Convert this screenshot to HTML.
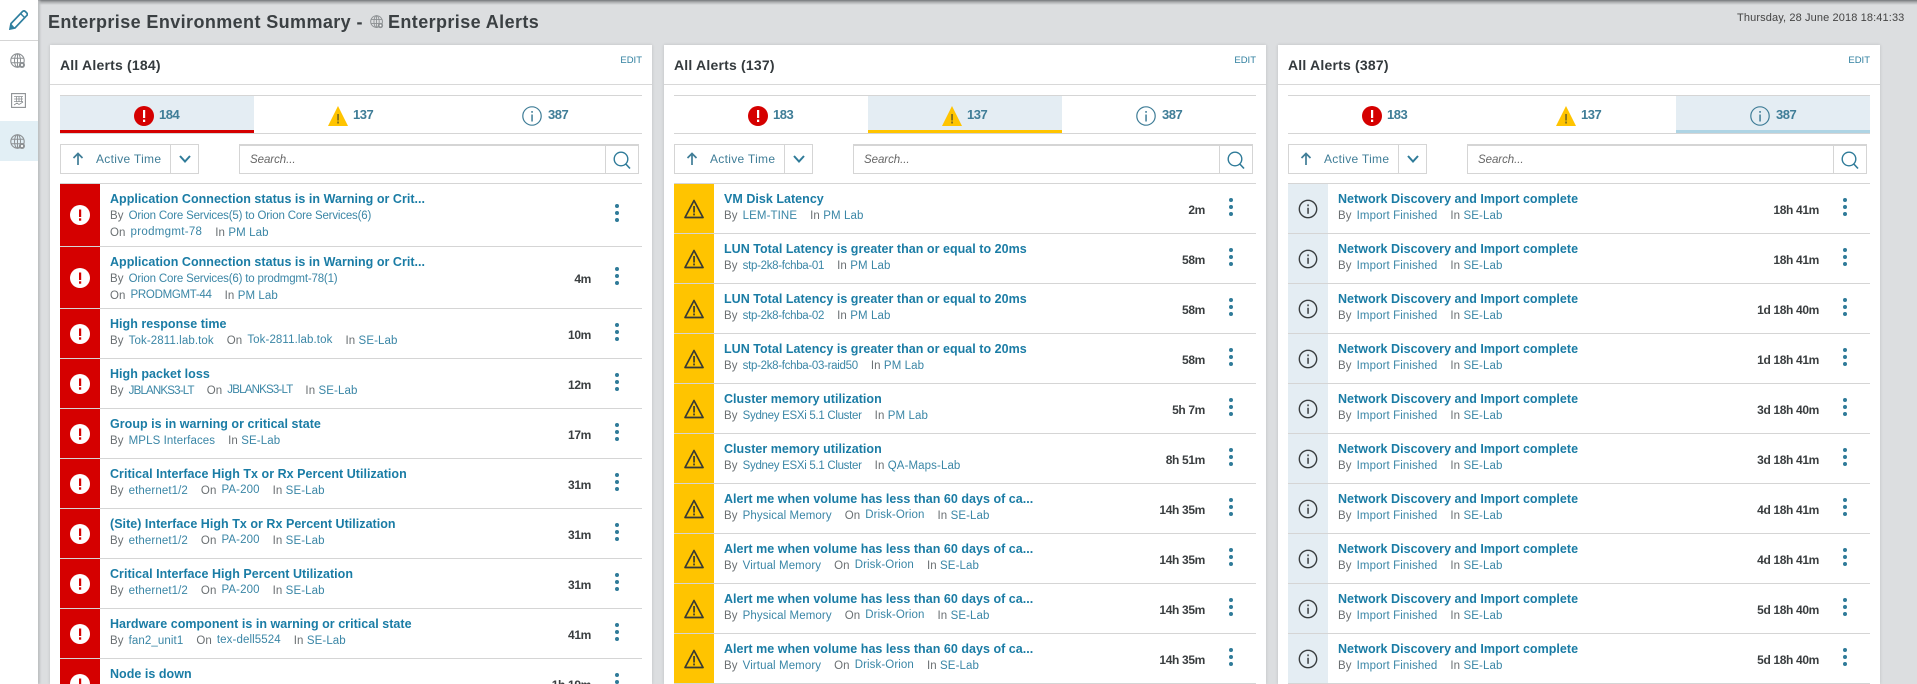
<!DOCTYPE html>
<html><head><meta charset="utf-8"><title>Enterprise Alerts</title>
<style>
*{box-sizing:border-box;margin:0;padding:0}
html,body{width:1917px;height:684px;overflow:hidden;background:#dcdee0;font-family:"Liberation Sans",sans-serif}
body{position:relative}
#top{position:absolute;left:0;top:0;width:1917px;height:5px;background:linear-gradient(#74777a,#a9abad 40%,#dcdee0)}
#side{position:absolute;left:0;top:0;width:38px;height:684px;background:#fff;box-shadow:2px 0 2px #bdbfc1}
#side .l{position:absolute;left:0;top:40px;width:38px;height:1px;background:#d5d5d5}
#side .a{position:absolute;left:0;top:121px;width:38px;height:40px;background:#e2eff5}
#side svg{position:absolute}
h1{position:absolute;left:48px;top:11px;font-size:18px;line-height:22px;font-weight:bold;color:#3b4043;white-space:nowrap;letter-spacing:.4px}
#date{position:absolute;left:1737px;top:11px;font-size:11px;line-height:14px;color:#444;white-space:nowrap;letter-spacing:.12px}
.p{position:absolute;top:45px;width:602px;height:639px;background:#fff;box-shadow:0 0 3px rgba(0,0,0,.15);overflow:hidden}
.p .hl{position:absolute;left:0;top:39px;width:602px;height:1px;background:#d8d8d8}
.p h2{position:absolute;left:10px;top:12px;font-size:14px;line-height:16px;font-weight:bold;color:#343a3d;white-space:nowrap;letter-spacing:.2px}
.p .ed{position:absolute;right:10px;top:10px;font-size:9.5px;line-height:12px;color:#2f7f9f}
.tb{position:absolute;left:10px;top:50px;width:582px;height:39px;border-top:1px solid #d5d5d5;border-bottom:1px solid #d5d5d5}
.ta{position:absolute;top:0;width:194px;height:37px;background:#e4edf3;border-bottom:3px solid}
.tb svg{position:absolute;top:10px;width:20px;height:20px}
.tb span{position:absolute;top:11px;font-size:13px;line-height:16px;font-weight:bold;color:#3f7d97;letter-spacing:-.5px}
.so{position:absolute;left:10px;top:99px;width:139px;height:30px;border:1px solid #d5d5d5}
.so .dv{position:absolute;left:109px;top:0;width:1px;height:28px;background:#d5d5d5}
.so span{position:absolute;left:35px;top:6px;font-size:12px;line-height:16px;color:#3f7d97;letter-spacing:.3px;white-space:nowrap}
.so svg{position:absolute}
.se{position:absolute;left:189px;top:99px;width:400px;height:30px;border:1px solid #d5d5d5;border-top-width:2px}
.se .dv{position:absolute;left:365px;top:0;width:1px;height:27px;background:#d5d5d5}
.se span{position:absolute;left:10px;top:6px;font-size:11.5px;line-height:16px;font-style:italic;color:#666;letter-spacing:-.05px}
.se svg{position:absolute;left:372px;top:4px}
.li{position:absolute;left:10px;top:0;width:582px;height:639px;overflow:hidden}
.r{position:absolute;left:0;width:582px;height:51px;border-top:1px solid #d5d5d5}
.h{height:63px}
.k{position:absolute;left:0;top:0;bottom:0;width:40px}
.e .k{background:#d50000}.w .k{background:#ffc400}.i .k{background:#e4edf3}
.ic{position:absolute;left:10px;top:50%;margin-top:-10px;width:20px;height:20px}
.t{position:absolute;left:50px;top:7px;font-size:12.5px;line-height:16px;font-weight:bold;color:#1a7ca5;white-space:nowrap;letter-spacing:.03px}
.s{position:absolute;left:50px;top:24px;font-size:11.5px;line-height:16px;color:#6b7073;white-space:nowrap;letter-spacing:.1px}
.s2{top:41px}
.s b{font-weight:normal;color:#3a86a6;margin-left:5px}
.s b.o{position:relative;top:-1px}
.s b.v{margin-left:0}
.s b.n{letter-spacing:-.3px}
.s b.c{letter-spacing:-.18px}
.s i{font-style:normal;margin-left:13px}
.s i:first-child{margin-left:0}
.m{position:absolute;right:51px;top:50%;margin-top:-7px;font-size:12px;line-height:16px;font-weight:bold;color:#3a3e40;font-style:normal;white-space:nowrap;letter-spacing:-.35px}
.d{position:absolute;left:555px;top:50%;margin-top:-4px;width:4px;height:4px;border-radius:50%;background:#2f7b99;box-shadow:0 -7px 0 #2f7b99,0 7px 0 #2f7b99}
</style></head><body>
<svg width="0" height="0" style="position:absolute">
<defs>
<symbol id="te" viewBox="0 0 20 20"><circle cx="10" cy="10" r="10" fill="#d50000"/><rect x="9" y="4" width="2.2" height="8" fill="#fff"/><rect x="9" y="13.6" width="2.2" height="2.4" fill="#fff"/></symbol>
<symbol id="tw" viewBox="0 0 20 20"><path d="M10 0L20 20H0Z" fill="#ffc400"/><rect x="9.2" y="8" width="1.7" height="6.5" fill="#7a6a20"/><rect x="9.2" y="15.5" width="1.7" height="2" fill="#7a6a20"/></symbol>
<symbol id="ti" viewBox="0 0 20 20"><circle cx="10" cy="10" r="9.2" fill="none" stroke="#3f7d97" stroke-width="1.2"/><rect x="9.3" y="8.5" width="1.5" height="7" fill="#3f7d97"/><rect x="9.3" y="5" width="1.5" height="1.8" fill="#3f7d97"/></symbol>
<symbol id="e" viewBox="0 0 20 20"><circle cx="10" cy="10" r="10" fill="#fff"/><rect x="9" y="4.5" width="2.2" height="7.5" fill="#d50000"/><rect x="9" y="13.3" width="2.2" height="2.4" fill="#d50000"/></symbol>
<symbol id="w" viewBox="0 0 20 20"><path d="M10 1.500L19 18.500H1Z" fill="none" stroke="#383a34" stroke-width="1.700" stroke-linejoin="round"/><rect x="9.200" y="7" width="1.700" height="6.500" fill="#383a34"/><rect x="9.200" y="14.500" width="1.700" height="1.900" fill="#383a34"/></symbol>
<symbol id="n" viewBox="0 0 20 20"><circle cx="10" cy="10" r="8.700" fill="none" stroke="#3a3e40" stroke-width="1.400"/><rect x="9.300" y="8.800" width="1.500" height="6" fill="#3a3e40"/><rect x="9.300" y="5.400" width="1.500" height="1.800" fill="#3a3e40"/></symbol>
<symbol id="g" viewBox="0 0 16 16"><circle cx="7.500" cy="7.500" r="6.700" fill="none" stroke="#8c9093" stroke-width="1.100"/><ellipse cx="7.500" cy="7.500" rx="3" ry="6.700" fill="none" stroke="#8c9093"/><path d="M1 5.200H14M1 9.800H14M7.500 1V14" stroke="#8c9093" fill="none"/><circle cx="12" cy="12" r="3" fill="#8c9093"/><circle cx="12" cy="12" r="1.100" fill="#fff"/></symbol>
<symbol id="ua" viewBox="0 0 12 14"><path d="M6 13V2M1.500 6L6 1.500L10.500 6" fill="none" stroke="#3f7d97" stroke-width="1.700"/></symbol>
</defs></svg>
<div id="top"></div>
<div id="side"><div class="l"></div><div class="a"></div>
<svg style="left:9px;top:10px" width="19" height="20" viewBox="0 0 19 20"><path d="M13.500 1.500C14.500.7 15.500.7 16.300 1.500L17.800 3C18.500 3.800 18.500 4.800 17.700 5.600L6 18L1 19L2 13.500Z" fill="none" stroke="#2f7f9f" stroke-width="1.700"/><path d="M2 13.500L6 18L1 19Z" fill="#2f7f9f"/><path d="M11.500 3.500L15.500 7.500" stroke="#2f7f9f" stroke-width="1.400"/></svg>
<svg style="left:10px;top:53px" width="16" height="16"><use href="#g"/></svg>
<svg style="left:11px;top:93px" width="15" height="15" viewBox="0 0 15 15"><rect x=".6" y=".6" width="13.800" height="13.800" fill="none" stroke="#8c9093" stroke-width="1.100"/><path d="M3 3.500H12M3 6H12M3 8.500H12M5.500 3.500V9M8 3.500V9M10.500 3.500V9M3 12L6 10L8 11.500L12 9" fill="none" stroke="#8c9093" stroke-width=".8"/></svg>
<svg style="left:10px;top:134px" width="16" height="16"><use href="#g"/></svg>
</div>
<h1>Enterprise Environment Summary - <svg style="position:absolute;left:322px;top:4px" width="14" height="14" viewBox="0 0 16 16"><use href="#g"/></svg><span style="position:absolute;left:340px;top:0">Enterprise Alerts</span></h1>
<div id="date">Thursday, 28 June 2018 18:41:33</div>

<!-- PANEL 1 -->
<div class="p" style="left:50px"><h2>All Alerts (184)</h2><div class="ed">EDIT</div><div class="hl"></div>
<div class="tb"><div class="ta" style="left:0;border-color:#d50000"></div><svg style="left:74px"><use href="#te"/></svg><span style="left:99px">184</span><svg style="left:268px"><use href="#tw"/></svg><span style="left:293px">137</span><svg style="left:462px"><use href="#ti"/></svg><span style="left:488px">387</span></div>
<div class="so"><svg style="left:11px;top:7px" width="12" height="14"><use href="#ua"/></svg><span>Active Time</span><div class="dv"></div><svg style="left:117px;top:9px" width="14" height="10" viewBox="0 0 14 10"><path d="M2 2L7 7.500L12 2" fill="none" stroke="#2f7b99" stroke-width="2"/></svg></div>
<div class="se"><span>Search...</span><div class="dv"></div><svg width="20" height="20" viewBox="0 0 20 20"><circle cx="9" cy="9" r="6.800" fill="none" stroke="#2f7b99" stroke-width="1.400"/><path d="M13.800 14L18 18.500" stroke="#2f7b99" stroke-width="1.600"/></svg></div>
<div class="li">
<div class="r h e" style="top:138px"><div class="k"></div><svg class="ic"><use href="#e"/></svg><div class="t">Application Connection status is in Warning or Crit...</div><div class="s"><i>By</i><b class="c">Orion Core Services(5) to Orion Core Services(6)</b></div><div class="s s2"><i>On</i><b class="o" style="letter-spacing:.3px">prodmgmt-78</b><i>In</i> <b class="v">PM Lab</b></div><u class="d"></u></div>
<div class="r h e" style="top:201px"><div class="k"></div><svg class="ic"><use href="#e"/></svg><div class="t">Application Connection status is in Warning or Crit...</div><div class="s"><i>By</i><b class="c">Orion Core Services(6) to prodmgmt-78(1)</b></div><div class="s s2"><i>On</i><b class="o" style="letter-spacing:-.3px">PRODMGMT-44</b><i>In</i> <b class="v">PM Lab</b></div><em class="m">4m</em><u class="d"></u></div>
<div class="r e" style="top:263px"><div class="k"></div><svg class="ic"><use href="#e"/></svg><div class="t">High response time</div><div class="s"><i>By</i><b>Tok-2811.lab.tok</b><i>On</i><b class="o">Tok-2811.lab.tok</b><i>In</i> <b class="v">SE-Lab</b></div><em class="m">10m</em><u class="d"></u></div>
<div class="r e" style="top:313px"><div class="k"></div><svg class="ic"><use href="#e"/></svg><div class="t">High packet loss</div><div class="s"><i>By</i><b style="letter-spacing:-.8px">JBLANKS3-LT</b><i>On</i><b class="o" style="letter-spacing:-.8px">JBLANKS3-LT</b><i>In</i> <b class="v">SE-Lab</b></div><em class="m">12m</em><u class="d"></u></div>
<div class="r e" style="top:363px"><div class="k"></div><svg class="ic"><use href="#e"/></svg><div class="t">Group is in warning or critical state</div><div class="s"><i>By</i><b>MPLS Interfaces</b><i>In</i> <b class="v">SE-Lab</b></div><em class="m">17m</em><u class="d"></u></div>
<div class="r e" style="top:413px"><div class="k"></div><svg class="ic"><use href="#e"/></svg><div class="t">Critical Interface High Tx or Rx Percent Utilization</div><div class="s"><i>By</i><b>ethernet1/2</b><i>On</i><b class="o">PA-200</b><i>In</i> <b class="v">SE-Lab</b></div><em class="m">31m</em><u class="d"></u></div>
<div class="r e" style="top:463px"><div class="k"></div><svg class="ic"><use href="#e"/></svg><div class="t">(Site) Interface High Tx or Rx Percent Utilization</div><div class="s"><i>By</i><b>ethernet1/2</b><i>On</i><b class="o">PA-200</b><i>In</i> <b class="v">SE-Lab</b></div><em class="m">31m</em><u class="d"></u></div>
<div class="r e" style="top:513px"><div class="k"></div><svg class="ic"><use href="#e"/></svg><div class="t">Critical Interface High Percent Utilization</div><div class="s"><i>By</i><b>ethernet1/2</b><i>On</i><b class="o">PA-200</b><i>In</i> <b class="v">SE-Lab</b></div><em class="m">31m</em><u class="d"></u></div>
<div class="r e" style="top:563px"><div class="k"></div><svg class="ic"><use href="#e"/></svg><div class="t">Hardware component is in warning or critical state</div><div class="s"><i>By</i><b>fan2_unit1</b><i>On</i><b class="o">tex-dell5524</b><i>In</i> <b class="v">SE-Lab</b></div><em class="m">41m</em><u class="d"></u></div>
<div class="r e" style="top:613px"><div class="k"></div><svg class="ic"><use href="#e"/></svg><div class="t">Node is down</div><em class="m">1h 19m</em><u class="d"></u></div>
</div></div>

<!-- PANEL 2 -->
<div class="p" style="left:664px"><h2>All Alerts (137)</h2><div class="ed">EDIT</div><div class="hl"></div>
<div class="tb"><div class="ta" style="left:194px;border-color:#ffc400"></div><svg style="left:74px"><use href="#te"/></svg><span style="left:99px">183</span><svg style="left:268px"><use href="#tw"/></svg><span style="left:293px">137</span><svg style="left:462px"><use href="#ti"/></svg><span style="left:488px">387</span></div>
<div class="so"><svg style="left:11px;top:7px" width="12" height="14"><use href="#ua"/></svg><span>Active Time</span><div class="dv"></div><svg style="left:117px;top:9px" width="14" height="10" viewBox="0 0 14 10"><path d="M2 2L7 7.500L12 2" fill="none" stroke="#2f7b99" stroke-width="2"/></svg></div>
<div class="se"><span>Search...</span><div class="dv"></div><svg width="20" height="20" viewBox="0 0 20 20"><circle cx="9" cy="9" r="6.800" fill="none" stroke="#2f7b99" stroke-width="1.400"/><path d="M13.800 14L18 18.500" stroke="#2f7b99" stroke-width="1.600"/></svg></div>
<div class="li">
<div class="r w" style="top:138px"><div class="k"></div><svg class="ic"><use href="#w"/></svg><div class="t">VM Disk Latency</div><div class="s"><i>By</i><b>LEM-TINE</b><i>In</i> <b class="v">PM Lab</b></div><em class="m">2m</em><u class="d"></u></div>
<div class="r w" style="top:188px"><div class="k"></div><svg class="ic"><use href="#w"/></svg><div class="t">LUN Total Latency is greater than or equal to 20ms</div><div class="s"><i>By</i><b class="n">stp-2k8-fchba-01</b><i>In</i> <b class="v">PM Lab</b></div><em class="m">58m</em><u class="d"></u></div>
<div class="r w" style="top:238px"><div class="k"></div><svg class="ic"><use href="#w"/></svg><div class="t">LUN Total Latency is greater than or equal to 20ms</div><div class="s"><i>By</i><b class="n">stp-2k8-fchba-02</b><i>In</i> <b class="v">PM Lab</b></div><em class="m">58m</em><u class="d"></u></div>
<div class="r w" style="top:288px"><div class="k"></div><svg class="ic"><use href="#w"/></svg><div class="t">LUN Total Latency is greater than or equal to 20ms</div><div class="s"><i>By</i><b class="n">stp-2k8-fchba-03-raid50</b><i>In</i> <b class="v">PM Lab</b></div><em class="m">58m</em><u class="d"></u></div>
<div class="r w" style="top:338px"><div class="k"></div><svg class="ic"><use href="#w"/></svg><div class="t">Cluster memory utilization</div><div class="s"><i>By</i><b class="n">Sydney ESXi 5.1 Cluster</b><i>In</i> <b class="v">PM Lab</b></div><em class="m">5h 7m</em><u class="d"></u></div>
<div class="r w" style="top:388px"><div class="k"></div><svg class="ic"><use href="#w"/></svg><div class="t">Cluster memory utilization</div><div class="s"><i>By</i><b class="n">Sydney ESXi 5.1 Cluster</b><i>In</i> <b class="v">QA-Maps-Lab</b></div><em class="m">8h 51m</em><u class="d"></u></div>
<div class="r w" style="top:438px"><div class="k"></div><svg class="ic"><use href="#w"/></svg><div class="t">Alert me when volume has less than 60 days of ca...</div><div class="s"><i>By</i><b>Physical Memory</b><i>On</i><b class="o">Drisk-Orion</b><i>In</i> <b class="v">SE-Lab</b></div><em class="m">14h 35m</em><u class="d"></u></div>
<div class="r w" style="top:488px"><div class="k"></div><svg class="ic"><use href="#w"/></svg><div class="t">Alert me when volume has less than 60 days of ca...</div><div class="s"><i>By</i><b>Virtual Memory</b><i>On</i><b class="o">Drisk-Orion</b><i>In</i> <b class="v">SE-Lab</b></div><em class="m">14h 35m</em><u class="d"></u></div>
<div class="r w" style="top:538px"><div class="k"></div><svg class="ic"><use href="#w"/></svg><div class="t">Alert me when volume has less than 60 days of ca...</div><div class="s"><i>By</i><b>Physical Memory</b><i>On</i><b class="o">Drisk-Orion</b><i>In</i> <b class="v">SE-Lab</b></div><em class="m">14h 35m</em><u class="d"></u></div>
<div class="r w" style="top:588px"><div class="k"></div><svg class="ic"><use href="#w"/></svg><div class="t">Alert me when volume has less than 60 days of ca...</div><div class="s"><i>By</i><b>Virtual Memory</b><i>On</i><b class="o">Drisk-Orion</b><i>In</i> <b class="v">SE-Lab</b></div><em class="m">14h 35m</em><u class="d"></u></div>
<div class="r" style="top:638px;height:1px"></div>
</div></div>

<!-- PANEL 3 -->
<div class="p" style="left:1278px"><h2>All Alerts (387)</h2><div class="ed">EDIT</div><div class="hl"></div>
<div class="tb"><div class="ta" style="left:388px;border-color:#aed4e4"></div><svg style="left:74px"><use href="#te"/></svg><span style="left:99px">183</span><svg style="left:268px"><use href="#tw"/></svg><span style="left:293px">137</span><svg style="left:462px"><use href="#ti"/></svg><span style="left:488px">387</span></div>
<div class="so"><svg style="left:11px;top:7px" width="12" height="14"><use href="#ua"/></svg><span>Active Time</span><div class="dv"></div><svg style="left:117px;top:9px" width="14" height="10" viewBox="0 0 14 10"><path d="M2 2L7 7.500L12 2" fill="none" stroke="#2f7b99" stroke-width="2"/></svg></div>
<div class="se"><span>Search...</span><div class="dv"></div><svg width="20" height="20" viewBox="0 0 20 20"><circle cx="9" cy="9" r="6.800" fill="none" stroke="#2f7b99" stroke-width="1.400"/><path d="M13.800 14L18 18.500" stroke="#2f7b99" stroke-width="1.600"/></svg></div>
<div class="li">
<div class="r i" style="top:138px"><div class="k"></div><svg class="ic"><use href="#n"/></svg><div class="t">Network Discovery and Import complete</div><div class="s"><i>By</i><b>Import Finished</b><i>In</i> <b class="v">SE-Lab</b></div><em class="m">18h 41m</em><u class="d"></u></div>
<div class="r i" style="top:188px"><div class="k"></div><svg class="ic"><use href="#n"/></svg><div class="t">Network Discovery and Import complete</div><div class="s"><i>By</i><b>Import Finished</b><i>In</i> <b class="v">SE-Lab</b></div><em class="m">18h 41m</em><u class="d"></u></div>
<div class="r i" style="top:238px"><div class="k"></div><svg class="ic"><use href="#n"/></svg><div class="t">Network Discovery and Import complete</div><div class="s"><i>By</i><b>Import Finished</b><i>In</i> <b class="v">SE-Lab</b></div><em class="m">1d 18h 40m</em><u class="d"></u></div>
<div class="r i" style="top:288px"><div class="k"></div><svg class="ic"><use href="#n"/></svg><div class="t">Network Discovery and Import complete</div><div class="s"><i>By</i><b>Import Finished</b><i>In</i> <b class="v">SE-Lab</b></div><em class="m">1d 18h 41m</em><u class="d"></u></div>
<div class="r i" style="top:338px"><div class="k"></div><svg class="ic"><use href="#n"/></svg><div class="t">Network Discovery and Import complete</div><div class="s"><i>By</i><b>Import Finished</b><i>In</i> <b class="v">SE-Lab</b></div><em class="m">3d 18h 40m</em><u class="d"></u></div>
<div class="r i" style="top:388px"><div class="k"></div><svg class="ic"><use href="#n"/></svg><div class="t">Network Discovery and Import complete</div><div class="s"><i>By</i><b>Import Finished</b><i>In</i> <b class="v">SE-Lab</b></div><em class="m">3d 18h 41m</em><u class="d"></u></div>
<div class="r i" style="top:438px"><div class="k"></div><svg class="ic"><use href="#n"/></svg><div class="t">Network Discovery and Import complete</div><div class="s"><i>By</i><b>Import Finished</b><i>In</i> <b class="v">SE-Lab</b></div><em class="m">4d 18h 41m</em><u class="d"></u></div>
<div class="r i" style="top:488px"><div class="k"></div><svg class="ic"><use href="#n"/></svg><div class="t">Network Discovery and Import complete</div><div class="s"><i>By</i><b>Import Finished</b><i>In</i> <b class="v">SE-Lab</b></div><em class="m">4d 18h 41m</em><u class="d"></u></div>
<div class="r i" style="top:538px"><div class="k"></div><svg class="ic"><use href="#n"/></svg><div class="t">Network Discovery and Import complete</div><div class="s"><i>By</i><b>Import Finished</b><i>In</i> <b class="v">SE-Lab</b></div><em class="m">5d 18h 40m</em><u class="d"></u></div>
<div class="r i" style="top:588px"><div class="k"></div><svg class="ic"><use href="#n"/></svg><div class="t">Network Discovery and Import complete</div><div class="s"><i>By</i><b>Import Finished</b><i>In</i> <b class="v">SE-Lab</b></div><em class="m">5d 18h 40m</em><u class="d"></u></div>
<div class="r" style="top:638px;height:1px"></div>
</div></div>
</body></html>
